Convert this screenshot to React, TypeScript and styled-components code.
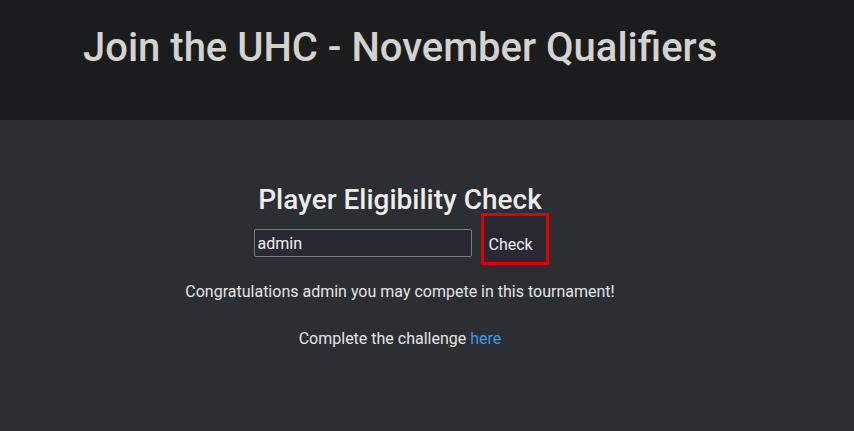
import React from "react";
import styled, { createGlobalStyle } from "styled-components";

const Global = createGlobalStyle`
  html, body { margin: 0; padding: 0; background: #2b2e32; }
  body { font-family: Roboto, "Liberation Sans", sans-serif; color: #e6e6e6; }
`;

const Page = styled.div`
  min-height: 431px;
  background: #2b2e32;
`;

const Header = styled.header`
  height: 120px;
  background: #1b1c1e;
  box-sizing: border-box;
  padding: 22px 0 0 83px;
`;

const Title = styled.h1`
  margin: 0;
  font-size: 40px;
  font-weight: 500;
  color: #d4d2cc;
  line-height: 52px;
`;

const Main = styled.main`
  width: 800px;
  text-align: center;
  padding-top: 67px;
`;

const Heading = styled.h2`
  margin: 0;
  font-size: 28px;
  font-weight: 500;
  line-height: 26px;
  color: #ececec;
`;

const Form = styled.form`
  display: flex;
  justify-content: center;
  align-items: flex-start;
  gap: 9px;
  padding-left: 2px;
`;

const Input = styled.input`
  width: 218px;
  height: 28px;
  margin-top: 16px;
  box-sizing: border-box;
  background: #2a2933;
  border: 1px solid #7b7b84;
  border-radius: 2px;
  color: #f0f0f0;
  font-family: Roboto, "Liberation Sans", sans-serif;
  font-size: 16px;
  padding: 0 3px;
`;

const Button = styled.button`
  width: 68px;
  height: 52px;
  box-sizing: border-box;
  background: #2a2933;
  border: 3px solid #e00000;
  color: #f0f0f0;
  font-family: Roboto, "Liberation Sans", sans-serif;
  font-size: 16px;
  padding: 10px 0 0 5px;
  text-align: left;
`;

const Message = styled.p<{ $gap: number }>`
  margin: ${(p) => p.$gap}px 0 0;
  font-size: 16px;
  line-height: 20px;
  color: #e4e4e4;
`;

const Link = styled.a`
  color: #3e9be6;
  text-decoration: none;
`;

export default function App() {
  return (
    <Page>
      <Global />
      <Header>
        <Title>Join the UHC - November Qualifiers</Title>
      </Header>
      <Main>
        <Heading>Player Eligibility Check</Heading>
        <Form onSubmit={(e) => e.preventDefault()}>
          <Input defaultValue="admin" />
          <Button type="submit">Check</Button>
        </Form>
        <Message $gap={17}>Congratulations admin you may compete in this tournament!</Message>
        <Message $gap={27}>
          Complete the challenge <Link href="#">here</Link>
        </Message>
      </Main>
    </Page>
  );
}
